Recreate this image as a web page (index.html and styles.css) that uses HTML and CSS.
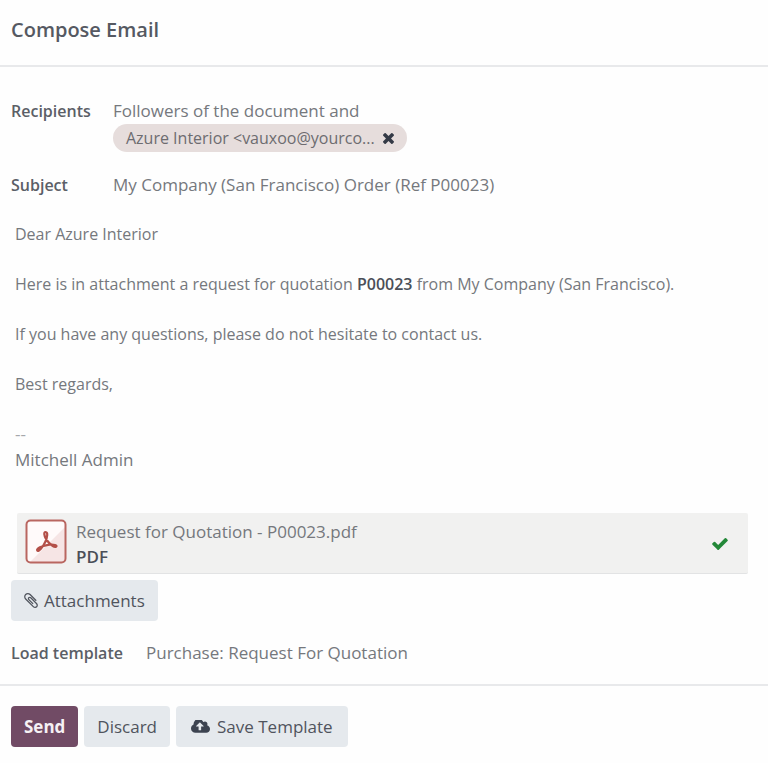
FILE: index.html
```html
<!DOCTYPE html>
<html lang="en">
<head>
<meta charset="utf-8">
<meta name="viewport" content="width=device-width, initial-scale=1">
<title>Compose Email</title>
<link rel="stylesheet" href="styles.css">
</head>
<body>
<form class="composer">
  <header class="header"><h1 class="title">Compose Email</h1></header>
  <main class="content">
    <div class="field">
      <span class="label">Recipients</span>
      <div class="value">
        <div>Followers of the document and</div>
        <span class="tag">Azure Interior &lt;vauxoo@yourco...
          <button class="tag-remove" type="button" aria-label="Remove recipient"><svg class="icon-times" viewBox="302 366 1188 1188" aria-hidden="true"><path d="M1490 1322q0 40-28 68l-136 136q-28 28-68 28t-68-28l-294-294-294 294q-28 28-68 28t-68-28l-136-136q-28-28-28-68t28-68l294-294-294-294q-28-28-28-68t28-68l136-136q28-28 68-28t68 28l294 294 294-294q28-28 68-28t68 28l136 136q28 28 28 68t-28 68l-294 294 294 294q28 28 28 68z"/></svg></button>
        </span>
      </div>
    </div>
    <div class="field subject">
      <label class="label" for="subject">Subject</label>
      <input class="value control" id="subject" type="text" value="My Company (San Francisco) Order (Ref P00023)">
    </div>
    <div class="message">
      <p>Dear Azure Interior</p>
      <p>Here is in attachment a request for quotation <strong>P00023</strong> from My Company (San Francisco).</p>
      <p>If you have any questions, please do not hesitate to contact us.</p>
      <p>Best regards,</p>
      <div class="signature"><div class="dashes">--</div><div>Mitchell Admin</div></div>
    </div>
    <div class="attachment">
      <svg class="icon-pdf" viewBox="0 0 42 46" aria-hidden="true">
        <rect x="1.5" y="1.5" width="39" height="42" rx="4" fill="#fffafa"/>
        <path d="M40 8V39Q40 43 36 43H5Z" fill="#f6e5e5"/>
        <rect x="1.5" y="1.5" width="39" height="42" rx="4" fill="none" stroke="#b96660" stroke-width="2"/>
        <path d="M20.500 13C23.500 13 22 19 20.500 22.500C18 28 13.500 33.500 12.200 31.500C11 29.500 17 27 23 25.800C29 24.800 33 26.500 31 27.800C28 29 20 21 19.300 15Q19.200 13 20.500 13Z" fill="none" stroke="#b34f48" stroke-width="2.2" stroke-linejoin="round"/>
      </svg>
      <div class="file"><div>Request for Quotation - P00023.pdf</div><strong>PDF</strong></div>
      <svg class="icon-check" viewBox="121 334 1550 1188" role="img" aria-label="Uploaded"><path d="M1671 566q0 40-28 68l-724 724-136 136q-28 28-68 28t-68-28l-136-136-362-362q-28-28-28-68t28-68l136-136q28-28 68-28t68 28l294 295 656-657q28-28 68-28t68 28l136 136q28 28 28 68z"/></svg>
    </div>
    <button class="button attach" type="button"><svg class="icon-clip" viewBox="196 132 1400 1528" aria-hidden="true"><path d="M1596 1385q0 117-79 196t-196 79q-135 0-235-100l-777-776q-113-115-113-271 0-159 110-270t269-111q158 0 273 113l605 606q10 10 10 22 0 16-30.500 46.500t-46.500 30.500q-13 0-23-10l-606-607q-79-77-181-77-106 0-179 75t-73 181q0 105 76 181l776 777q63 63 145 63 64 0 106-42t42-106q0-82-63-145l-581-581q-26-24-60-24-29 0-48 19t-19 48q0 32 25 59l410 410q10 10 10 22 0 16-31 47t-47 31q-12 0-22-10l-410-410q-63-61-63-149 0-82 57-139t139-57q88 0 149 63l581 581q100 98 100 235z"/></svg>Attachments</button>
    <div class="field template">
      <label class="label" for="template">Load template</label>
      <select class="value control" id="template"><option>Purchase: Request For Quotation</option></select>
    </div>
  </main>
  <footer class="footer">
    <button class="button primary" type="submit">Send</button>
    <button class="button" type="button">Discard</button>
    <button class="button save" type="button"><svg class="icon-cloud" viewBox="-64 256 1920 1280" aria-hidden="true"><path d="M1216 864q0-14-9-23l-352-352q-9-9-23-9t-23 9l-351 351q-10 12-10 24 0 14 9 23t23 9h224v352q0 13 9.500 22.500t22.500 9.500h192q13 0 22.500-9.500t9.500-22.500v-352h224q13 0 22.500-9.500t9.500-22.500zm640 288q0 159-112.500 271.500t-271.500 112.500h-1088q-185 0-316.500-131.500t-131.500-316.500q0-130 70-240t188-165q-2-30-2-43 0-212 150-362t362-150q156 0 285.500 87t188.500 231q71-62 166-62 106 0 181 75t75 181q0 76-41 138 130 31 213.500 135.500t83.500 238.500z"/></svg>Save Template</button>
  </footer>
</form>
</body>
</html>
```
FILE: styles.css
```css
* { box-sizing: border-box; }

body {
  margin: 0;
  background: #fefefe;
  color: #75787d;
  font: 17px/26px "Open Sans", "Noto Sans", sans-serif;
}

p, h1 { margin: 0; }
svg { flex: none; fill: currentColor; }
strong { color: #4b4f58; font-weight: 600; }

.header {
  padding: 16px 11px 21px;
  border-bottom: 2px solid #e8e9eb;
}

.title {
  color: #555962;
  font-size: 20px;
  line-height: 28px;
  font-weight: 600;
}

.content { padding: 31px 11px 18px; }

.field {
  display: grid;
  grid-template-columns: 102px minmax(0, 1fr);
}

.label {
  color: #5b5f67;
  font-size: 16px;
  font-weight: 600;
}

.control {
  width: 100%;
  height: 26px;
  padding: 0;
  border: 0;
  outline: 0;
  appearance: none;
  background: transparent;
  color: inherit;
  font: inherit;
}

.tag {
  display: inline-flex;
  align-items: center;
  gap: 8px;
  height: 28px;
  padding: 0 13px;
  border-radius: 14px;
  background: #e6dddc;
  color: #6d6c70;
  font-size: 16px;
  vertical-align: top;
}

.tag-remove {
  display: flex;
  padding: 0;
  border: 0;
  background: none;
  color: #343a46;
}

.icon-times { width: 11px; height: 11px; }
.subject { margin-top: 20px; }

.message {
  display: grid;
  gap: 24px;
  margin-top: 23px;
  padding: 0 4px;
  font-size: 16px;
}

.signature { font-size: 17px; }
.dashes { color: #a5a7ab; }

.attachment {
  display: flex;
  align-items: center;
  gap: 9px;
  margin: 40px 9px 6px 6px;
  padding: 6px 20px 4px 8px;
  border-bottom: 1px solid #e2e3e4;
  border-radius: 2px;
  background: #f1f1f0;
  line-height: 25px;
}

.file { flex: 1; }
.icon-pdf { width: 42px; height: 46px; align-self: flex-start; }
.icon-check { width: 16px; height: 12px; color: #238838; }

.button {
  display: inline-flex;
  align-items: center;
  justify-content: center;
  height: 41px;
  padding: 0 13px;
  border: 0;
  border-radius: 4px;
  background: #e5e9ed;
  color: #50545d;
  font: inherit;
  font-weight: 500;
  vertical-align: top;
}

.primary {
  background: #714b65;
  color: #f6f1f4;
  font-weight: 700;
}

.save { padding: 0 15px; }
.icon-clip { width: 14px; height: 15px; margin-right: 6px; }
.icon-cloud { width: 19px; height: 13px; margin-right: 7px; color: #3c4350; }

.template {
  grid-template-columns: 135px minmax(0, 1fr);
  margin-top: 19px;
}

.footer {
  display: flex;
  flex-wrap: wrap;
  gap: 6px;
  padding: 20px 11px 16px;
  border-top: 2px solid #e8e9eb;
}
```
